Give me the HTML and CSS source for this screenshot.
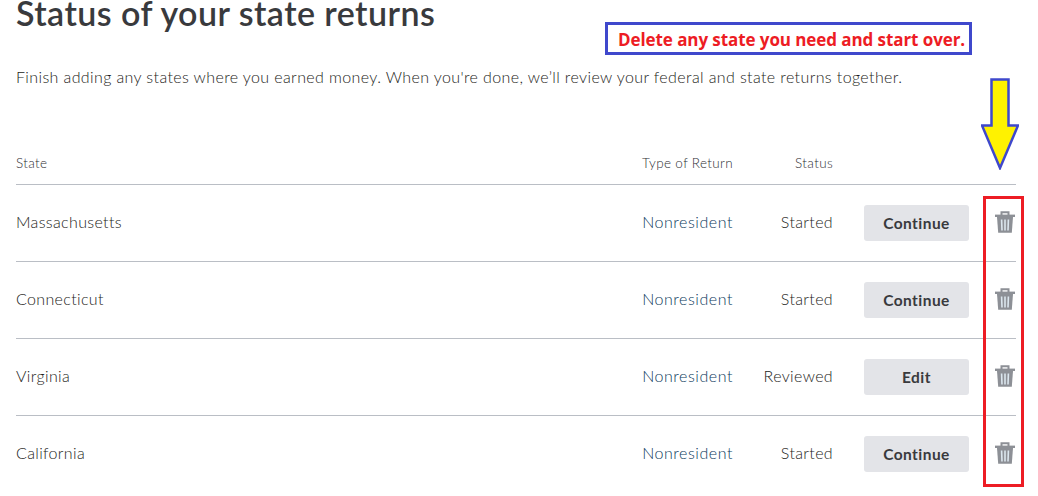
FILE: index.html
```html
<!DOCTYPE html>
<html lang="en">
<head>
<meta charset="utf-8">
<title>Status of your state returns</title>
<link rel="stylesheet" href="styles.css">
</head>
<body>
<main class="page">
  <h1 class="title">Status of your state returns</h1>
  <p class="intro">Finish adding any states where you earned money. When you're done, we’ll review your federal and state returns together.</p>
  <div class="table">
    <div class="row head">
      <span>State</span><span class="num">Type of Return</span><span class="num">Status</span>
    </div>
    <div class="row">
      <span>Massachusetts</span><span class="num blue">Nonresident</span><span class="num">Started</span>
      <button class="btn">Continue</button>
      <svg class="trash" viewBox="0 0 20 22"><use href="#trash"/></svg>
    </div>
    <div class="row">
      <span>Connecticut</span><span class="num blue">Nonresident</span><span class="num">Started</span>
      <button class="btn">Continue</button>
      <svg class="trash" viewBox="0 0 20 22"><use href="#trash"/></svg>
    </div>
    <div class="row">
      <span>Virginia</span><span class="num blue">Nonresident</span><span class="num">Reviewed</span>
      <button class="btn">Edit</button>
      <svg class="trash" viewBox="0 0 20 22"><use href="#trash"/></svg>
    </div>
    <div class="row last">
      <span>California</span><span class="num blue">Nonresident</span><span class="num">Started</span>
      <button class="btn">Continue</button>
      <svg class="trash" viewBox="0 0 20 22"><use href="#trash"/></svg>
    </div>
  </div>
</main>

<div class="note">Delete any state you need and start over.</div>
<svg class="arrow" viewBox="0 0 38 92">
  <path d="M10.5 1.5H27.5V47.5H37L19 90L1 47.5H10.5Z" fill="#fff200" stroke="#3f48cc" stroke-width="2.5"/>
</svg>
<div class="redbox"></div>

<svg class="defs" width="0" height="0">
  <symbol id="trash" viewBox="0 0 20 22">
    <path d="M6.5 4V1.2H13.5V4" fill="none" stroke="#8d9096" stroke-width="2"/>
    <path d="M0 3.6H20V6H0Z" fill="#8d9096"/>
    <path d="M2 6H18L16.8 21.8H3.2Z" fill="#8d9096"/>
    <path d="M5.8 8.5H7.4L7.8 19.5H6.2ZM9.2 8.5H10.8V19.5H9.2ZM12.6 8.5H14.2L13.8 19.5H12.2Z" fill="#dbe6ee"/>
  </symbol>
</svg>
</body>
</html>
```
FILE: styles.css
```css
html, body {
  margin: 0;
  padding: 0;
  background: #fff;
  overflow: hidden;
}
body {
  position: relative;
  width: 1038px;
  height: 496px;
  font-family: "Lato", "Open Sans", sans-serif;
  color: #393a3d;
}
.page {
  padding: 0 22px 0 16px;
}
.title {
  margin: 0;
  font-size: 34px;
  line-height: 26px;
  font-weight: 600;
  letter-spacing: 0.45px;
}
.intro {
  margin: 40px 0 0;
  font-size: 16px;
  line-height: 22px;
  font-weight: 300;
  color: #1c1d20;
  letter-spacing: 0.385px;
}
.table {
  margin-top: 66px;
}
.row {
  display: grid;
  grid-template-columns: 1fr 150px 100px 136px 47px;
  align-items: center;
  height: 76px;
  border-bottom: 1px solid #babec5;
  font-size: 16px;
  font-weight: 300;
  color: #1c1d20;
  letter-spacing: 0.35px;
}
.row span {
  margin-bottom: 3px;
}
.row.last {
  border-bottom: 0;
}
.row.head {
  height: 29px;
  padding-top: 1px;
  align-items: start;
  font-size: 13.5px;
  font-weight: 300;
  letter-spacing: 0.35px;
  color: #2e2f33;
}
.num {
  text-align: right;
}
.row .blue {
  color: #0b3a5c;
  letter-spacing: 0.55px;
}
.btn {
  justify-self: end;
  width: 105px;
  height: 36px;
  border: 0;
  border-radius: 3px;
  background: #e3e4e8;
  color: #393a3d;
  font: 700 15.5px "Lato", sans-serif;
  letter-spacing: 0.45px;
}
.trash {
  justify-self: end;
  width: 20px;
  height: 22px;
  margin: 0 1px 2px 0;
}
.defs {
  position: absolute;
}
.note {
  position: absolute;
  left: 605px;
  top: 22px;
  width: 367px;
  height: 33px;
  box-sizing: border-box;
  border: 3px solid #3f48cc;
  padding-left: 10px;
  color: #ed1c24;
  font: 700 17px/30px "Open Sans", sans-serif;
  letter-spacing: -0.08px;
  white-space: nowrap;
}
.arrow {
  position: absolute;
  left: 981px;
  top: 78px;
  width: 38px;
  height: 92px;
}
.redbox {
  position: absolute;
  left: 983px;
  top: 196px;
  width: 41px;
  height: 291px;
  box-sizing: border-box;
  border: 3px solid #ed1c24;
}
```
